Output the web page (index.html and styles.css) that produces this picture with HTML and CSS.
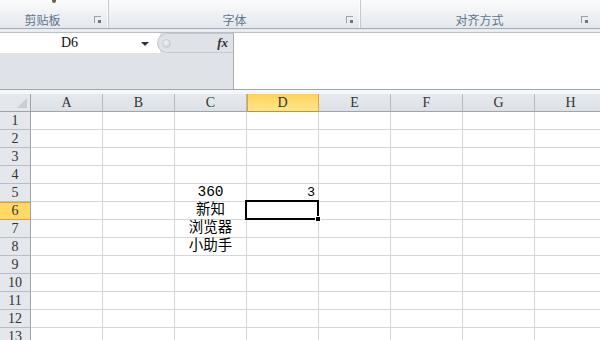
FILE: index.html
```html
<!DOCTYPE html>
<html lang="zh-CN">
<head>
    <meta charset="UTF-8">
    <title>Excel</title>
    <link rel="stylesheet" href="styles.css">
</head>
<body>
    <!-- 功能区 -->
    <div class="ribbon">
        <div class="group group-clip">
            <span class="icon-stub"></span>
            <span class="group-label">剪贴板</span>
            <span class="launcher"></span>
        </div>
        <div class="group group-font">
            <span class="group-label">字体</span>
            <span class="launcher"></span>
        </div>
        <div class="group group-align">
            <span class="group-label">对齐方式</span>
            <span class="launcher"></span>
        </div>
    </div>
    <div class="ribbon-gap"></div>

    <!-- 名称框 + 编辑栏 -->
    <div class="formula-area">
        <div class="left-panel">
            <div class="name-row">
                <div class="name-box">
                    <span class="name-text">D6</span>
                    <span class="drop-arrow"></span>
                </div>
                <div class="fx-bar">
                    <span class="knob"></span>
                    <span class="fx">fx</span>
                </div>
            </div>
        </div>
        <div class="formula-input"></div>
    </div>
    <div class="sheet-gap"></div>

    <!-- 工作表 -->
    <div class="sheet">
        <div class="row head">
            <div class="rh corner"></div>
            <div class="ch">A</div><div class="ch">B</div><div class="ch">C</div><div class="ch sel">D</div>
            <div class="ch">E</div><div class="ch">F</div><div class="ch">G</div><div class="ch">H</div>
        </div>
        <div class="row"><div class="rh">1</div><div class="c"></div><div class="c"></div><div class="c"></div><div class="c"></div><div class="c"></div><div class="c"></div><div class="c"></div><div class="c"></div></div>
        <div class="row"><div class="rh">2</div><div class="c"></div><div class="c"></div><div class="c"></div><div class="c"></div><div class="c"></div><div class="c"></div><div class="c"></div><div class="c"></div></div>
        <div class="row"><div class="rh">3</div><div class="c"></div><div class="c"></div><div class="c"></div><div class="c"></div><div class="c"></div><div class="c"></div><div class="c"></div><div class="c"></div></div>
        <div class="row"><div class="rh">4</div><div class="c"></div><div class="c"></div><div class="c"></div><div class="c"></div><div class="c"></div><div class="c"></div><div class="c"></div><div class="c"></div></div>
        <div class="row"><div class="rh">5</div><div class="c"></div><div class="c"></div><div class="c center">360</div><div class="c num">3</div><div class="c"></div><div class="c"></div><div class="c"></div><div class="c"></div></div>
        <div class="row"><div class="rh sel">6</div><div class="c"></div><div class="c"></div><div class="c center">新知</div><div class="c active"><span class="active-frame"><span class="fill-handle"></span></span></div><div class="c"></div><div class="c"></div><div class="c"></div><div class="c"></div></div>
        <div class="row"><div class="rh">7</div><div class="c"></div><div class="c"></div><div class="c center">浏览器</div><div class="c"></div><div class="c"></div><div class="c"></div><div class="c"></div><div class="c"></div></div>
        <div class="row"><div class="rh">8</div><div class="c"></div><div class="c"></div><div class="c center">小助手</div><div class="c"></div><div class="c"></div><div class="c"></div><div class="c"></div><div class="c"></div></div>
        <div class="row"><div class="rh">9</div><div class="c"></div><div class="c"></div><div class="c"></div><div class="c"></div><div class="c"></div><div class="c"></div><div class="c"></div><div class="c"></div></div>
        <div class="row"><div class="rh">10</div><div class="c"></div><div class="c"></div><div class="c"></div><div class="c"></div><div class="c"></div><div class="c"></div><div class="c"></div><div class="c"></div></div>
        <div class="row"><div class="rh">11</div><div class="c"></div><div class="c"></div><div class="c"></div><div class="c"></div><div class="c"></div><div class="c"></div><div class="c"></div><div class="c"></div></div>
        <div class="row"><div class="rh">12</div><div class="c"></div><div class="c"></div><div class="c"></div><div class="c"></div><div class="c"></div><div class="c"></div><div class="c"></div><div class="c"></div></div>
        <div class="row"><div class="rh">13</div><div class="c"></div><div class="c"></div><div class="c"></div><div class="c"></div><div class="c"></div><div class="c"></div><div class="c"></div><div class="c"></div></div>
    </div>
</body>
</html>
```
FILE: styles.css
```css
* {
    margin: 0;
    padding: 0;
    box-sizing: border-box;
}

body {
    width: 600px;
    height: 340px;
    overflow: hidden;
    background: #ffffff;
    font-family: "Liberation Mono", "Noto Sans CJK SC", monospace;
    color: #222;
}

/* ---------- 功能区 ---------- */
.ribbon {
    display: flex;
    height: 29px;
    background: linear-gradient(#fbfcfd, #e3e7ec);
    border-bottom: 1px solid #a4abb4;
}

.group {
    position: relative;
    display: flex;
    flex-direction: column;
    align-items: center;
    justify-content: flex-end;
    padding-bottom: 0;
    border-right: 1px solid #c3c9d0;
    box-shadow: inset -1px 0 0 #fbfcfd;
}

.group-clip { width: 109px; }
.group-font { width: 252px; }
.group-align { flex: 1; border-right: none; box-shadow: none; }

.icon-stub {
    position: absolute;
    top: 0;
    left: 52px;
    width: 4px;
    height: 3px;
    border-radius: 0 0 2px 2px;
    background: #7b5e3a;
}

.group-label {
    font-family: "Noto Sans CJK SC", sans-serif;
    font-size: 12px;
    line-height: 17px;
    color: #62738a;
}

.group-clip .group-label { margin-right: 23px; }
.group-align .group-label { margin-right: 2px; }

/* 对话框启动器 */
.launcher {
    position: absolute;
    right: 7px;
    bottom: 5px;
    width: 7px;
    height: 7px;
    border-top: 1px solid #9aa2ab;
    border-left: 1px solid #9aa2ab;
}

.launcher::after {
    content: "";
    position: absolute;
    right: 0;
    bottom: 0;
    width: 3px;
    height: 3px;
    background: #6d7680;
}

.group-align .launcher { right: 12px; }

.ribbon-gap {
    height: 4px;
    background: #e9ecf0;
    border-bottom: 1px solid #b9bfc6;
}

/* ---------- 编辑栏 ---------- */
.formula-area {
    display: flex;
    height: 57px;
    border-bottom: 1px solid #a0a7af;
}

.left-panel {
    width: 234px;
    background: #dfe3e8;
    border-right: 1px solid #a7adb5;
}

.name-row {
    display: flex;
    height: 20px;
}

.name-box {
    width: 160px;
    display: flex;
    align-items: center;
    background: #ffffff;
}

.name-text {
    flex: 1;
    text-align: center;
    font-family: "Liberation Serif", serif;
    font-size: 14px;
    padding-left: 2px;
    color: #111;
}

.drop-arrow {
    width: 0;
    height: 0;
    margin: 1px 11px 0 4px;
    border-left: 4px solid transparent;
    border-right: 4px solid transparent;
    border-top: 4px solid #333;
}

.fx-bar {
    flex: 1;
    display: flex;
    align-items: center;
    margin-left: -3px;
    background: #dfe3e8;
    border: 1px solid #c5cad1;
    border-right: none;
    border-radius: 10px 0 0 10px;
}

.knob {
    width: 9px;
    height: 9px;
    margin-left: 4px;
    border-radius: 50%;
    background: radial-gradient(circle at 40% 35%, #f4f5f7, #c3c8ce);
    border: 1px solid #c9ced4;
}

.fx {
    margin-left: auto;
    margin-right: 5px;
    font-family: "Liberation Serif", serif;
    font-style: italic;
    font-weight: bold;
    font-size: 13px;
    color: #333;
}

.formula-input {
    flex: 1;
    background: #ffffff;
}

.sheet-gap {
    height: 4px;
    background: #f6f7f8;
}

/* ---------- 工作表 ---------- */
.sheet {
    display: flex;
    flex-direction: column;
}

.row {
    display: flex;
    height: 18px;
    flex-shrink: 0;
}

.rh {
    width: 31px;
    flex-shrink: 0;
    display: flex;
    align-items: center;
    justify-content: center;
    font-family: "Liberation Serif", serif;
    font-size: 14px;
    color: #333;
    background: #e4e7eb;
    border-right: 1px solid #9da4ac;
    border-bottom: 1px solid #b9bec4;
}

.rh.sel {
    background: #ffd966;
    border-bottom: 1px solid #e0a13a;
    box-shadow: inset 0 1px 0 #e0a13a;
}

.corner {
    position: relative;
    border-bottom-color: #9da4ac;
}

.corner::after {
    content: "";
    position: absolute;
    right: 3px;
    bottom: 3px;
    border-left: 10px solid transparent;
    border-bottom: 10px solid #c9ced3;
}

.ch {
    width: 72px;
    flex-shrink: 0;
    display: flex;
    align-items: center;
    justify-content: center;
    font-family: "Liberation Serif", serif;
    font-size: 14px;
    color: #333;
    background: linear-gradient(#e6e9ed, #dde1e6);
    border-right: 1px solid #b3b9c0;
    border-bottom: 1px solid #9da4ac;
}

.ch.sel {
    background: linear-gradient(#fcd35b, #ffe68a);
    border-right: 1px solid #e0a13a;
    border-bottom: 1px solid #d18f2a;
    box-shadow: inset 1px 0 0 #e0a13a;
}

.c {
    width: 72px;
    flex-shrink: 0;
    display: flex;
    align-items: center;
    font-size: 13.5px;
    line-height: 17px;
    color: #000;
    border-right: 1px solid #d6d6d6;
    border-bottom: 1px solid #d6d6d6;
    white-space: nowrap;
}

.c.center {
    justify-content: center;
    font-size: 14.5px;
}

.c.num {
    justify-content: flex-end;
    padding-right: 3px;
}

/* 活动单元格 */
.c.active {
    position: relative;
}

.active-frame {
    position: absolute;
    top: -2px;
    left: -2px;
    right: -1px;
    bottom: -1px;
    border: 2px solid #000;
    z-index: 2;
}

.fill-handle {
    position: absolute;
    right: -4px;
    bottom: -4px;
    width: 6px;
    height: 6px;
    background: #000;
    border: 1px solid #fff;
}
```
